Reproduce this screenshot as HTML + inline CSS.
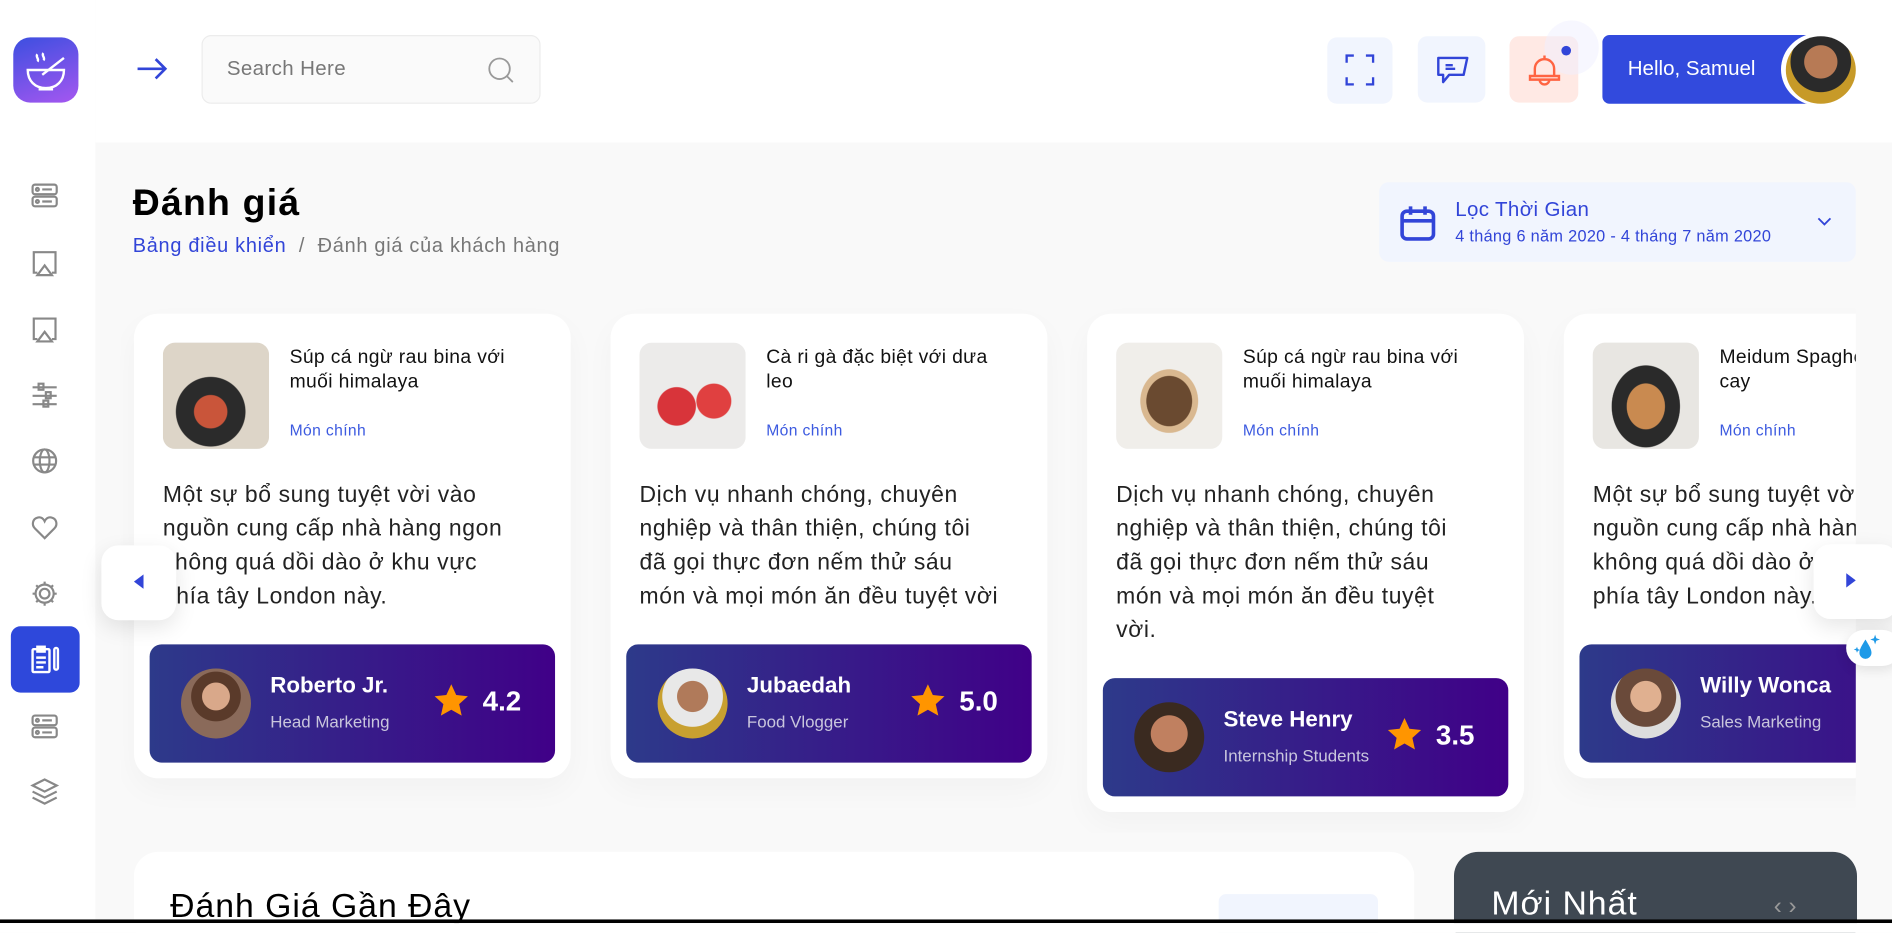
<!DOCTYPE html>
<html><head><meta charset="utf-8">
<style>
*{box-sizing:border-box;margin:0;padding:0}
html,body{width:1892px;height:932px;overflow:hidden;background:#fff}
#w{position:absolute;left:0;top:0;width:1568px;height:773px;transform:scale(1.20663);transform-origin:0 0;font-family:"Liberation Sans","Noto Sans CJK SC",sans-serif;background:#f9f9f9;overflow:hidden}
.abs{position:absolute}
.side{left:0;top:0;width:79px;height:773px;background:#fff}
.head{left:79px;top:0;width:1489px;height:118px;background:#fff}
.logo{left:11px;top:31px;width:54px;height:54px;border-radius:14px;background:linear-gradient(160deg,#3c4fe0,#a557f0)}
.ib{width:54px;height:55px;border-radius:8px;background:#f1f5fe}
.card{background:#fff;border-radius:20px;width:362px;box-shadow:0 10px 25px rgba(0,0,0,0.03)}
.img{position:absolute;left:24px;top:24px;width:88px;height:88px;border-radius:10px}
.ttl{position:absolute;left:129px;top:27px;font-size:16px;line-height:20px;color:#111;white-space:nowrap;letter-spacing:0.3px}
.cat{position:absolute;left:129px;top:89px;font-size:13px;color:#3c5ae0;letter-spacing:0.3px}
.txt{position:absolute;left:24px;top:137px;font-size:19px;line-height:28px;color:#222;white-space:nowrap;letter-spacing:0.5px}
.foot{position:absolute;left:13px;width:336px;height:98px;border-radius:10px;background:linear-gradient(90deg,#2d3a8a,#400088)}
.av{position:absolute;left:26px;top:20px;width:58px;height:58px;border-radius:50%}
.nm{position:absolute;left:100px;top:23px;font-size:18.5px;font-weight:bold;color:#fff}
.rl{position:absolute;left:100px;top:56px;font-size:14px;color:#c9c6dd}
.st{position:absolute;left:236px;top:33px}
.rt{position:absolute;left:276px;top:34px;font-size:23px;font-weight:bold;color:#fff}
.nav{width:62px;height:62px;border-radius:14px;background:#fff;box-shadow:0 6px 18px rgba(0,0,0,0.1)}
</style></head><body><div id="w">
<div class="abs side"></div>
<div class="abs head"></div>
<div class="abs logo"><svg width="54" height="54" viewBox="0 0 54 54" fill="none" stroke="#fff" stroke-width="2"><path d="M12 27h30c0 9-6 15-15 15s-15-6-15-15z"/><path d="M21 43h12"/><path d="M24 31l18-14"/><path d="M20 14c-2 2 2 4 0 6M25 13c-2 2 2 4 0 6"/></svg></div>
<svg class="abs" style="left:25px;top:150px" width="24" height="540" viewBox="0 0 24 540" fill="none" stroke="#888" stroke-width="1.8">
<rect x="2" y="3" width="20" height="8" rx="2"/><rect x="2" y="13" width="20" height="8" rx="2"/><circle cx="6" cy="7" r="1.2"/><circle cx="6" cy="17" r="1.2"/><path d="M10 7h8M10 17h8"/>
<path d="M6 76H3V59h18v17h-3M12 70l6 8H6z"/>
<path d="M6 131H3V114h18v17h-3M12 125l6 8H6z"/>
<path d="M2 171h20M2 178h20M2 185h20"/><rect x="7" y="168" width="4" height="5"/><rect x="13" y="175" width="4" height="5"/><rect x="11" y="182" width="4" height="5"/>
<circle cx="12" cy="232" r="9.5"/><ellipse cx="12" cy="232" rx="4" ry="9.5"/><path d="M2.5 229h19M2.5 235h19"/>
<path d="M12 296l-8-8c-3-3-2-8 2-9 3-1 5 1 6 3 1-2 3-4 6-3 4 1 5 6 2 9z"/>
<circle cx="12" cy="342" r="4"/><circle cx="12" cy="342" r="7.5"/><path d="M12 332v3M12 349v3M2 342h3M19 342h3M5 335l2 2M17 347l2 2M5 349l2-2M17 337l2-2"/>
<rect x="2" y="443" width="20" height="8" rx="2"/><rect x="2" y="453" width="20" height="8" rx="2"/><circle cx="6" cy="447" r="1.2"/><circle cx="6" cy="457" r="1.2"/><path d="M10 447h8M10 457h8"/>
<path d="M12 496l10 5-10 5-10-5zM2 506l10 5 10-5M2 511l10 5 10-5"/>
</svg>
<div class="abs" style="left:9px;top:519px;width:57px;height:55px;border-radius:8px;background:#2e48db"></div>
<svg class="abs" style="left:25px;top:535px" width="26" height="24" viewBox="0 0 26 24" fill="none" stroke="#fff" stroke-width="2"><rect x="2" y="3" width="14" height="19" rx="1"/><rect x="6" y="1" width="6" height="4" fill="#fff"/><path d="M5 10h8M5 14h8M5 18h6"/><rect x="20" y="2" width="3" height="18" rx="1.5"/></svg>
<svg class="abs" style="left:113px;top:47px" width="26" height="20" viewBox="0 0 26 20" fill="none" stroke="#3245d8" stroke-width="2.2"><path d="M1 10h23M16 2l8 8-8 8"/></svg>
<div class="abs" style="left:167px;top:29px;width:281px;height:57px;border-radius:8px;background:#fafafa;border:1px solid #ececec"></div>
<div class="abs" style="left:188px;top:47px;font-size:17px;color:#777;letter-spacing:0.3px">Search Here</div>
<svg class="abs" style="left:403px;top:46px" width="24" height="24" viewBox="0 0 24 24" fill="none" stroke="#999" stroke-width="1.5"><circle cx="11" cy="11" r="8.5"/><path d="M17 17l5 5"/></svg>
<div class="abs ib" style="left:1100px;top:31px"></div>
<svg class="abs" style="left:1115px;top:45px" width="24" height="26" viewBox="0 0 24 26" fill="none" stroke="#3245d8" stroke-width="2"><path d="M1 7V1h6M17 1h6v6M1 19v6h6M23 19v6h-6"/></svg>
<div class="abs ib" style="left:1175px;top:30px;width:56px"></div>
<svg class="abs" style="left:1190px;top:45px" width="28" height="28" viewBox="0 0 28 28" fill="none" stroke="#3245d8" stroke-width="2"><path d="M2 3h24l-3 14H11l-5 6v-6H2z" stroke-linejoin="round"/><path d="M8 9h6M8 12h8"/></svg>
<div class="abs" style="left:1251px;top:30px;width:57px;height:55px;border-radius:8px;background:#ffe9e4"></div>
<div class="abs" style="left:1280px;top:17px;width:45px;height:45px;border-radius:50%;background:rgba(240,240,255,0.5)"></div>
<svg class="abs" style="left:1266px;top:44px" width="28" height="28" viewBox="0 0 28 28" fill="none" stroke="#ff6442" stroke-width="2"><path d="M14 2v3M6 19V13a8 8 0 0 1 16 0v6M2 19h24v3H2zM10 22a4 4 0 0 0 8 0"/></svg>
<div class="abs" style="left:1294px;top:38px;width:8px;height:8px;border-radius:50%;background:#3245d8"></div>
<div class="abs" style="left:1328px;top:29px;width:190px;height:57px;border-radius:6px;background:#324add"></div>
<div class="abs" style="left:1349px;top:47px;font-size:17px;color:#fff">Hello, Samuel</div>
<div class="abs" style="left:1476px;top:27px;width:65px;height:61px;border-radius:50%;background:#fff"></div>
<div class="abs" style="left:1480px;top:30px;width:58px;height:56px;border-radius:50%;background:radial-gradient(circle at 50% 38%,#b77a55 0 30%,#2a2a2a 31% 55%,#c79a28 56%)"></div>
<div class="abs" style="left:110px;top:150px;font-size:31px;font-weight:bold;color:#000;letter-spacing:1px">Đánh giá</div>
<div class="abs" style="left:110px;top:195px;font-size:16.5px;color:#3245d8;letter-spacing:0.6px">Bảng điều khiển <span style="color:#777">&nbsp;/&nbsp; Đánh giá của khách hàng</span></div>
<div class="abs" style="left:1143px;top:151px;width:395px;height:66px;border-radius:8px;background:#f1f5fe"></div>
<svg class="abs" style="left:1160px;top:170px" width="30" height="30" viewBox="0 0 30 30" fill="none" stroke="#3245d8" stroke-width="3"><rect x="2" y="5" width="26" height="23" rx="4"/><path d="M2 13h26M9 1v7M21 1v7"/></svg>
<div class="abs" style="left:1206px;top:164px;font-size:17px;color:#3245d8;letter-spacing:0.3px">Lọc Thời Gian</div>
<div class="abs" style="left:1206px;top:188px;font-size:13.5px;color:#3245d8;letter-spacing:0.25px">4 tháng 6 năm 2020 - 4 tháng 7 năm 2020</div>
<svg class="abs" style="left:1506px;top:180px" width="12" height="8" viewBox="0 0 12 8" fill="none" stroke="#3245d8" stroke-width="1.5"><path d="M1 1l5 5 5-5"/></svg>
<div class="abs" style="left:100px;top:250px;width:1438px;height:440px;overflow:hidden">
<div class="abs card" style="left:11px;top:10px;height:385px">
 <div class="img" style="background:radial-gradient(circle at 45% 65%,#c9553a 0 18%,#2b2b2b 19% 38%,#ddd5c8 39%),#ccc"></div>
 <div class="ttl">Súp cá ngừ rau bina với<br>muối himalaya</div><div class="cat">Món chính</div>
 <div class="txt">Một sự bổ sung tuyệt vời vào<br>nguồn cung cấp nhà hàng ngon<br>không quá dồi dào ở khu vực<br>phía tây London này.</div>
 <div class="foot" style="top:274px"><div class="av" style="background:radial-gradient(circle at 50% 40%,#d9a88a 0 25%,#5a3a2a 26% 45%,#8a6a5a 46%)"></div><div class="nm">Roberto Jr.</div><div class="rl">Head Marketing</div>
 <svg class="st" width="28" height="27" viewBox="0 0 24 23"><path fill="#ff9500" d="M12 0l3.5 7.6 8.3.9-6.2 5.6 1.8 8.2L12 18.1l-7.4 4.2 1.8-8.2L.2 8.5l8.3-.9z"/></svg><div class="rt">4.2</div></div>
</div>
<div class="abs card" style="left:406px;top:10px;height:385px">
 <div class="img" style="background:radial-gradient(circle at 35% 60%,#d8343a 0 20%,transparent 21%),radial-gradient(circle at 70% 55%,#e04040 0 18%,transparent 19%),#ecebea"></div>
 <div class="ttl">Cà ri gà đặc biệt với dưa<br>leo</div><div class="cat">Món chính</div>
 <div class="txt">Dịch vụ nhanh chóng, chuyên<br>nghiệp và thân thiện, chúng tôi<br>đã gọi thực đơn nếm thử sáu<br>món và mọi món ăn đều tuyệt vời</div>
 <div class="foot" style="top:274px"><div class="av" style="background:radial-gradient(circle at 50% 40%,#b07a5a 0 28%,#e8e8e8 29% 55%,#c8a030 56%)"></div><div class="nm">Jubaedah</div><div class="rl">Food Vlogger</div>
 <svg class="st" width="28" height="27" viewBox="0 0 24 23"><path fill="#ff9500" d="M12 0l3.5 7.6 8.3.9-6.2 5.6 1.8 8.2L12 18.1l-7.4 4.2 1.8-8.2L.2 8.5l8.3-.9z"/></svg><div class="rt">5.0</div></div>
</div>
<div class="abs card" style="left:801px;top:10px;height:413px">
 <div class="img" style="background:radial-gradient(ellipse at 50% 55%,#6a4a30 0 30%,#d9b890 31% 38%,#f0eeea 39%),#eee"></div>
 <div class="ttl">Súp cá ngừ rau bina với<br>muối himalaya</div><div class="cat">Món chính</div>
 <div class="txt">Dịch vụ nhanh chóng, chuyên<br>nghiệp và thân thiện, chúng tôi<br>đã gọi thực đơn nếm thử sáu<br>món và mọi món ăn đều tuyệt<br>vời.</div>
 <div class="foot" style="top:302px"><div class="av" style="background:radial-gradient(circle at 50% 45%,#c08060 0 35%,#3a2a20 36%)"></div><div class="nm">Steve Henry</div><div class="rl">Internship Students</div>
 <svg class="st" width="28" height="27" viewBox="0 0 24 23"><path fill="#ff9500" d="M12 0l3.5 7.6 8.3.9-6.2 5.6 1.8 8.2L12 18.1l-7.4 4.2 1.8-8.2L.2 8.5l8.3-.9z"/></svg><div class="rt">3.5</div></div>
</div>
<div class="abs card" style="left:1196px;top:10px;height:385px">
 <div class="img" style="background:radial-gradient(ellipse at 50% 60%,#c98a50 0 25%,#2a2a2a 26% 45%,#e8e6e2 46%)"></div>
 <div class="ttl">Meidum Spaghetti<br>cay</div><div class="cat">Món chính</div>
 <div class="txt">Một sự bổ sung tuyệt vời vào<br>nguồn cung cấp nhà hàng ngon<br>không quá dồi dào ở khu vực<br>phía tây London này.</div>
 <div class="foot" style="top:274px"><div class="av" style="background:radial-gradient(circle at 50% 40%,#e0b090 0 28%,#6a4a3a 29% 55%,#ddd 56%)"></div><div class="nm">Willy Wonca</div><div class="rl">Sales Marketing</div></div>
</div>
</div>
<div class="abs nav" style="left:84px;top:452px"></div>
<svg class="abs" style="left:111px;top:476px" width="8" height="12"><path d="M8 0v12L0 6z" fill="#3245d8"/></svg>
<div class="abs nav" style="left:1503px;top:451px;width:70px"></div>
<svg class="abs" style="left:1530px;top:475px" width="8" height="12"><path d="M0 0v12l8-6z" fill="#3245d8"/></svg>
<div class="abs" style="left:1530px;top:522px;width:45px;height:30px;border-radius:15px;background:#fff;box-shadow:0 3px 10px rgba(0,0,0,0.1)"></div>
<svg class="abs" style="left:1535px;top:524px" width="24" height="26" viewBox="0 0 24 26"><path d="M11 6c3 5 5 8 5 11a5 5 0 0 1-10 0c0-3 2-6 5-11z" fill="#1e9ae8"/><path d="M19 2l1 3 3 1-3 1-1 3-1-3-3-1 3-1zM4 12l.7 2 2 .7-2 .7L4 17l-.7-2-2-.7 2-.7z" fill="#1e9ae8"/></svg>
<div class="abs" style="left:111px;top:706px;width:1061px;height:80px;border-radius:20px;background:#fff"></div>
<div class="abs" style="left:141px;top:735px;font-size:28px;color:#000;letter-spacing:0.8px">Đánh Giá Gần Đây</div>
<div class="abs" style="left:1010px;top:741px;width:132px;height:40px;border-radius:6px;background:#f1f5fe"></div>
<div class="abs" style="left:1205px;top:706px;width:334px;height:80px;border-radius:20px;background:#3f4852"></div>
<div class="abs" style="left:1236px;top:733px;font-size:28px;color:#fff;letter-spacing:0.8px">Mới Nhất</div>
<div class="abs" style="left:1470px;top:740px;font-size:20px;color:#999">‹ ›</div>
<div class="abs" style="left:0;top:762px;width:1568px;height:3px;background:#000"></div>
<div class="abs" style="left:0;top:765px;width:1568px;height:10px;background:#fff"></div>
</div></body></html>
